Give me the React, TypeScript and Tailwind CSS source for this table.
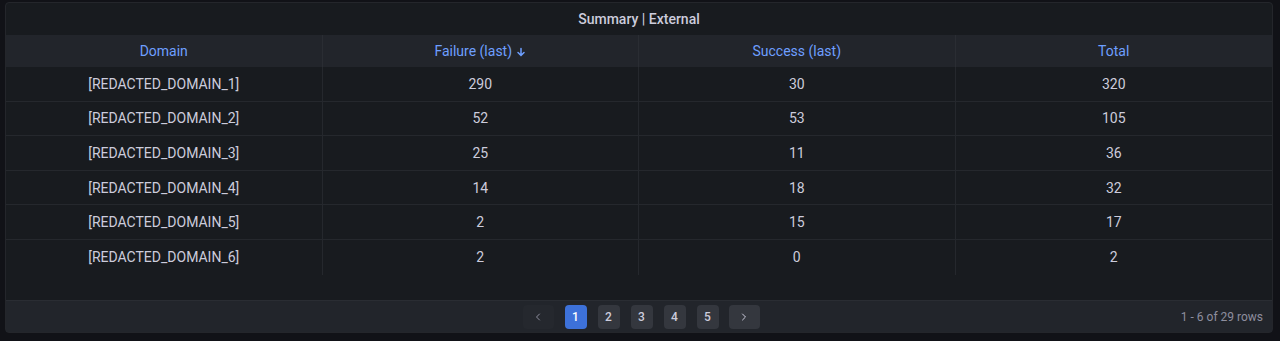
import { ChevronLeft, ChevronRight } from 'lucide-react';

const columns = ['Domain', 'Failure (last)', 'Success (last)', 'Total'];

const rows = [
  ['[REDACTED_DOMAIN_1]', '290', '30', '320'],
  ['[REDACTED_DOMAIN_2]', '52', '53', '105'],
  ['[REDACTED_DOMAIN_3]', '25', '11', '36'],
  ['[REDACTED_DOMAIN_4]', '14', '18', '32'],
  ['[REDACTED_DOMAIN_5]', '2', '15', '17'],
  ['[REDACTED_DOMAIN_6]', '2', '0', '2'],
];

const SortArrow = () => (
  <svg width="10" height="10" viewBox="0 0 10 10" className="ml-1 mt-[2px]">
    <path d="M5 1.5v6.5M2 5.5l3 3 3-3" stroke="#6e9fff" strokeWidth="1.5" fill="none" strokeLinecap="round" />
  </svg>
);

const Pager = () => (
  <div className="flex items-center gap-[11px] ml-[4px]">
    <button className="w-[31px] h-[24px] rounded-sm bg-[#25282e] text-[#8e8e9e] flex items-center justify-center">
      <ChevronLeft size={12} strokeWidth={2} />
    </button>
    {[1, 2, 3, 4, 5].map((p) => (
      <button
        key={p}
        className={`w-[22px] h-[24px] rounded-sm text-xs font-medium flex items-center justify-center ${
          p === 1 ? 'bg-[#3d71d9] text-white' : 'bg-[#34373e] text-[#ccccdc]'
        }`}
      >
        {p}
      </button>
    ))}
    <button className="w-[31px] h-[24px] rounded-sm bg-[#34373e] text-[#ccccdc] flex items-center justify-center -ml-[1px]">
      <ChevronRight size={12} strokeWidth={2} />
    </button>
  </div>
);

export default function App() {
  return (
    <div
      className="w-full h-[341px] bg-[#111217] pt-[2px] pl-[5px] pr-[7px]"
      style={{ fontFamily: 'Roboto, "Liberation Sans", sans-serif' }}
    >
      <div className="h-[331px] bg-[#181b1f] border border-[#24262b] rounded-sm flex flex-col">
        <div className="h-[32px] flex items-center justify-center text-[#ccccdc] text-sm font-medium">
          Summary | External
        </div>

        <div className="grid grid-cols-4 h-[32px] bg-[#22252b]">
          {columns.map((c, i) => (
            <div
              key={c}
              className={`flex items-center justify-center text-sm text-[#6e9fff] ${
                i < 3 ? 'border-r border-[#2a2d33]' : ''
              }`}
            >
              {c}
              {i === 1 && <SortArrow />}
            </div>
          ))}
        </div>

        {rows.map((r, ri) => (
          <div
            key={ri}
            className={`grid grid-cols-4 h-[34.6px] ${ri < rows.length - 1 ? 'border-b border-[#25282d]' : ''}`}
          >
            {r.map((cell, ci) => (
              <div
                key={ci}
                className={`flex items-center justify-center text-sm text-[#ccccdc] ${
                  ci < 3 ? 'border-r border-[#25282d]' : ''
                }`}
              >
                {cell}
              </div>
            ))}
          </div>
        ))}

        <div className="flex-1" />

        <div className="relative h-[32px] bg-[#22252b] flex items-center justify-center border-t border-[#2a2d33]">
          <Pager />
          <span className="absolute right-[9px] text-xs text-[#8e8e9e]">1 - 6 of 29 rows</span>
        </div>
      </div>
    </div>
  );
}
